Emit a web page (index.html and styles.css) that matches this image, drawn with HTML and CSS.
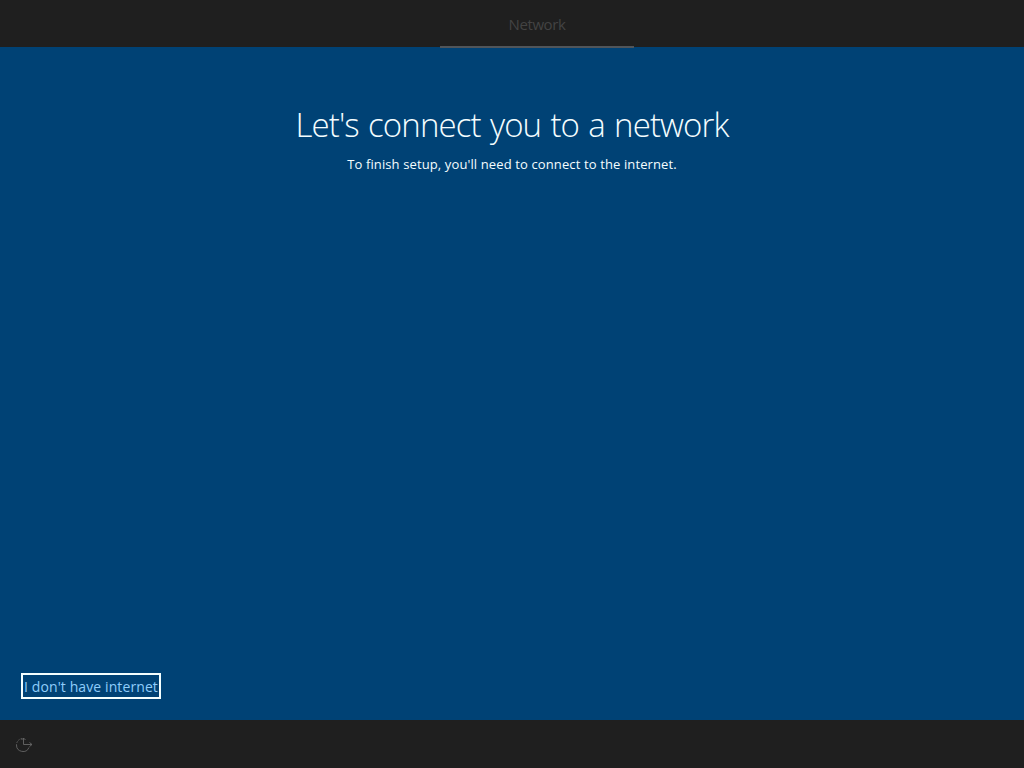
FILE: index.html
```
<!DOCTYPE html>
<html lang="en">
<head>
  <meta charset="UTF-8">
  <title>Network setup</title>
  <meta name="viewport" content="width=device-width, initial-scale=1.0">
  <link rel="stylesheet" href="styles.css">
</head>
<body>
  <header class="topbar">
    <div class="tab">Network</div>
  </header>

  <main class="content">
    <h1>Let's connect you to a network</h1>
    <p class="subtitle">To finish setup, you'll need to connect to the internet.</p>
    <a class="link-btn" href="#">I don't have internet</a>
  </main>

  <footer class="bottombar">
    <svg class="ease-icon" width="18" height="18" viewBox="0 0 18 18">
      <path class="dashed" d="M7 3.500A6.500 6.500 0 0 0 1.500 10"/>
      <path d="M1.500 10A6.500 6.500 0 0 0 14 12.500"/>
      <path d="M8.500 3v6.500H17M6.500 5l2-2 2 2M14.500 7.500l2.500 2-2.500 2"/>
    </svg>
  </footer>
</body>
</html>
```
FILE: styles.css
```
* { margin: 0; padding: 0; box-sizing: border-box; }
body {
  display: flex;
  flex-direction: column;
  height: 100vh;
  overflow: hidden;
  font-family: "Open Sans", "Noto Sans", sans-serif;
  background-color: #004275;
}
.topbar {
  display: flex;
  justify-content: center;
  height: 47px;
  padding-left: 50px;
  background-color: #1f1f1f;
}
.tab {
  width: 194px;
  height: 48px;
  padding-top: 13px;
  border-bottom: 2px solid #50555a;
  color: #434343;
  font-size: 15px;
  letter-spacing: -0.4px;
  line-height: 22px;
  text-align: center;
}
.content {
  flex: 1;
  display: flex;
  flex-direction: column;
  align-items: center;
  padding: 54px 21px 21px;
  color: #f4fdff;
}
h1 {
  font-size: 33px;
  font-weight: 300;
  letter-spacing: -0.88px;
  word-spacing: 1.5px;
  line-height: 48px;
  white-space: nowrap;
}
.subtitle {
  margin-top: 5px;
  font-size: 13px;
  letter-spacing: 0.12px;
  line-height: 20px;
}
.link-btn {
  align-self: flex-start;
  width: 140px;
  height: 26px;
  margin-top: auto;
  border: 2px solid #f4ffff;
  color: #8fcdfb;
  font-size: 14px;
  letter-spacing: 0.1px;
  line-height: 23px;
  text-align: center;
  text-decoration: none;
  white-space: nowrap;
}
.bottombar {
  display: flex;
  align-items: center;
  height: 48px;
  padding-left: 15px;
  background-color: #1f1f1f;
}
.ease-icon {
  fill: none;
  stroke: #666;
  stroke-width: 0.9;
}
.ease-icon .dashed {
  stroke-dasharray: 1.5 1.2;
}
```
